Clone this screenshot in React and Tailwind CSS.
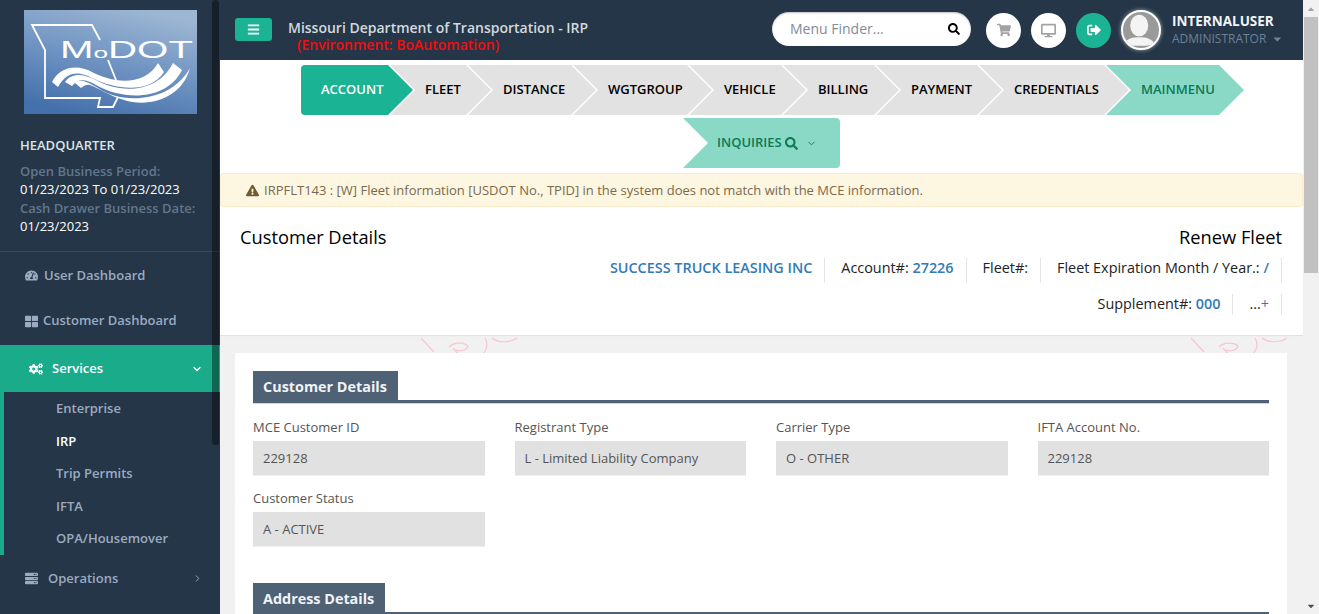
import React from "react";
import { ChevronDown, ChevronRight } from "lucide-react";
import {
  FaBars,
  FaCaretDown,
  FaCaretUp,
  FaCogs,
  FaDesktop,
  FaExclamationTriangle,
  FaSearch,
  FaServer,
  FaShoppingCart,
  FaSignOutAlt,
  FaTachometerAlt,
  FaThLarge,
} from "react-icons/fa";

const steps = [
  { label: "FLEET", width: "w-[101px]" },
  { label: "DISTANCE", width: "w-[128px]" },
  { label: "WGTGROUP", width: "w-[139px]" },
  { label: "VEHICLE", width: "w-[117px]" },
  { label: "BILLING", width: "w-[116px]" },
  { label: "PAYMENT", width: "w-[126px]" },
  { label: "CREDENTIALS", width: "w-[150px]" },
];
const subItems = ["Enterprise", "IRP", "Trip Permits", "IFTA", "OPA/Housemover"];

function Logo() {
  return (
    <svg width="173" height="104" viewBox="0 0 173 104" className="block">
      <defs>
        <linearGradient id="logoBg" x1="0.7" y1="0" x2="0.3" y2="1">
          <stop offset="0" stopColor="#9db6d3" />
          <stop offset="0.5" stopColor="#7094c2" />
          <stop offset="1" stopColor="#4470ab" />
        </linearGradient>
      </defs>
      <rect width="173" height="104" fill="url(#logoBg)" />
      <path d="M76 30 L68 15 L8 15 L21 40 L21 88 L76 88 L74 97 L89 97 L94 87" fill="none" stroke="#fff" strokeWidth="1.8" />
      <path d="M84 50 L92 70" fill="none" stroke="#fff" strokeWidth="1.8" />
      <text x="36" y="48" fill="#fff" fontFamily="Liberation Sans, sans-serif" fontSize="23" textLength="133" lengthAdjust="spacingAndGlyphs">
        M<tspan fontSize="15">o</tspan>DOT
      </text>
      <path d="M28 72 C36 56 54 54 68 62 C86 72 120 78 134 53 L140 62 C126 84 92 80 68 68 C54 60 42 62 34 77 Z" fill="#fff" />
      <path d="M41 72 C48 62 60 64 72 70 C92 82 132 86 149 53 L158 60 C142 92 98 90 72 75 C62 69 54 68 48 76 Z" fill="#fff" />
      <path d="M51 73 C56 68 64 72 74 78 C96 94 146 94 166 58 C158 88 126 98 100 90 C86 86 74 78 66 75 C62 74 60 76 57 78 Z" fill="#fff" />
    </svg>
  );
}

function Avatar() {
  return (
    <div className="w-10 h-10 rounded-full border-2 border-white overflow-hidden bg-[#9a9a9a] shadow-[0_0_4px_rgba(255,255,255,0.6)] shrink-0">
      <svg viewBox="0 0 40 40" width="100%" height="100%" className="block">
        <ellipse cx="18" cy="15" rx="10" ry="12" fill="#f4f4f4" />
        <path d="M1 36 C3 29 12 28 18 28 C24 28 33 29 35 36 C28 38 8 38 1 36 Z" fill="#f4f4f4" />
      </svg>
    </div>
  );
}

function NavRow({ icon, label, gap, rowClass }) {
  return (
    <div className={`flex items-center pl-[25px] text-[13px] font-semibold text-[#9cabc2] ${rowClass}`}>
      <span className="w-[13px] text-[13px] flex justify-center">{icon}</span>
      <span className={gap}>{label}</span>
    </div>
  );
}

function Sidebar() {
  return (
    <aside className="relative w-[220px] shrink-0 h-full bg-[#243647] overflow-hidden">
      <div className="pt-[10px] pl-6">
        <Logo />
      </div>
      <div className="pl-5 pt-[22px] border-b border-[#374a5b] h-[138px] text-[13px] leading-[18.5px]">
        <div className="font-semibold text-[#dfe3e6] mb-[7px]">HEADQUARTER</div>
        <div className="font-semibold text-[#62778e]">Open Business Period:</div>
        <div className="text-white">01/23/2023 To 01/23/2023</div>
        <div className="font-semibold text-[#62778e]">Cash Drawer Business Date:</div>
        <div className="text-white">01/23/2023</div>
      </div>
      <NavRow icon={<FaTachometerAlt />} label="User Dashboard" gap="ml-[6px]" rowClass="h-[47px]" />
      <NavRow icon={<FaThLarge />} label="Customer Dashboard" gap="ml-[5px]" rowClass="h-[46px] pb-[2px]" />
      <div className="h-[47px] bg-[#1aab8b] flex items-center pl-[29px] pr-[17px] text-white text-[13px] font-semibold">
        <FaCogs className="text-[14px]" />
        <span className="ml-[9px] flex-1">Services</span>
        <ChevronDown size={12} strokeWidth={2.5} />
      </div>
      <div className="border-l-4 border-[#1aab8b] h-[163px] pt-[1px]">
        {subItems.map((item) => (
          <div
            key={item}
            className={`h-[32.4px] pl-[52px] flex items-center text-[13px] font-semibold ${
              item === "IRP" ? "text-white" : "text-[#9cabc2]"
            }`}
          >
            {item}
          </div>
        ))}
      </div>
      <div className="flex items-center h-[47px] pl-[25px] pr-[17px] text-[13px] font-semibold text-[#9cabc2]">
        <FaServer className="text-[13px]" />
        <span className="ml-[10px] flex-1">Operations</span>
        <ChevronRight size={11} strokeWidth={2} />
      </div>
      <div className="absolute right-[1px] top-0 w-[7px] h-[445px] bg-black/40 rounded-[4px]"></div>
    </aside>
  );
}

function Header() {
  return (
    <header className="h-[60px] bg-[#243647] flex items-center pl-[15px] pr-[21px] shrink-0">
      <button className="w-[37px] h-[23px] rounded-[3px] bg-[#1ab394] text-white flex items-center justify-center text-[13px] -mt-[1px]">
        <FaBars />
      </button>
      <div className="ml-4 text-[14px] leading-[17px] font-semibold mt-[11px]">
        <div className="text-[#d3d9de]">Missouri Department of Transportation - IRP</div>
        <div className="text-[#f20d0d] pl-[9px]">(Environment: BoAutomation)</div>
      </div>
      <div className="ml-auto w-[199px] h-[34px] rounded-full bg-white flex items-center pl-[18px] pr-[11px] shadow-[inset_0_1px_2px_rgba(0,0,0,0.25)] -mt-[2px]">
        <span className="flex-1 text-[14px] text-[#7f8c9b] pb-[2px]">Menu Finder...</span>
        <FaSearch className="text-[12px] text-black" />
      </div>
      <div className="ml-[15px] w-[35px] h-[35px] rounded-full bg-white flex items-center justify-center text-[#a3a3a3] text-[14px]">
        <FaShoppingCart />
      </div>
      <div className="ml-[10px] w-[35px] h-[35px] rounded-full bg-white flex items-center justify-center text-[#a3a3a3] text-[15px]">
        <FaDesktop />
      </div>
      <div className="ml-[10px] w-[35px] h-[35px] rounded-full bg-[#1ab394] flex items-center justify-center text-white text-[14px]">
        <FaSignOutAlt />
      </div>
      <div className="ml-[10px]">
        <Avatar />
      </div>
      <div className="ml-[11px] w-[110px]">
        <div className="text-[13.5px] leading-[18px] font-bold text-[#f1f4f6]">INTERNALUSER</div>
        <div className="flex items-center text-[12px] leading-[18px] text-[#6c8298]">
          ADMINISTRATOR
          <FaCaretDown className="ml-[7px] text-[12px]" />
        </div>
      </div>
    </header>
  );
}

function Wizard() {
  const chevron =
    "[clip-path:polygon(0_0,calc(100%-25px)_0,100%_50%,calc(100%-25px)_100%,0_100%,25px_50%)]";
  return (
    <div className="bg-white pt-[5px] shrink-0">
      <div className="flex justify-center pl-[22px] text-[13px] font-semibold h-[50px]">
        <div className="h-[50px] w-[112px] flex items-center pl-5 bg-[#1ab394] text-white rounded-l-[4px] [clip-path:polygon(0_0,calc(100%-25px)_0,100%_50%,calc(100%-25px)_100%,0_100%)]">
          ACCOUNT
        </div>
        {steps.map((step) => (
          <div key={step.label} className={`h-[50px] flex items-center pl-[35px] -ml-[23px] bg-[#e2e2e2] text-black ${step.width} ${chevron}`}>
            {step.label}
          </div>
        ))}
        <div className={`h-[50px] w-[138px] flex items-center pl-[35px] -ml-[23px] bg-[#8ad9c6] text-[#0b7a55] ${chevron}`}>
          MAINMENU
        </div>
      </div>
      <div className="flex justify-center mt-[3px] h-[50px]">
        <div className="h-[50px] w-[157px] flex items-center pl-[34px] bg-[#8ad9c6] text-[#0b7a55] text-[13px] font-semibold rounded-r-[4px] [clip-path:polygon(0_0,100%_0,100%_100%,0_100%,25px_50%)]">
          INQUIRIES
          <FaSearch className="ml-[3px] text-[13px]" />
          <ChevronDown className="ml-[8px]" size={11} strokeWidth={2} />
        </div>
      </div>
    </div>
  );
}

function InfoItem({ children, className }) {
  return <div className={`pl-4 pr-3 border-r border-[#e4e4e4] flex items-center ${className}`}>{children}</div>;
}

function PageHead() {
  return (
    <div className="bg-white h-[128px] pt-[18px] pr-[21px] pl-5 shrink-0 shadow-[0_1px_1px_rgba(0,0,0,0.06)] relative z-10 text-[14.4px] text-[#222]">
      <div className="flex justify-between text-[18.3px] leading-[24px] text-black font-medium">
        <span>Customer Details</span>
        <span>Renew Fleet</span>
      </div>
      <div className="flex justify-end h-[25px] mt-[9px]">
        <InfoItem className="font-semibold text-[#337ab7] pb-[5px]">SUCCESS TRUCK LEASING INC</InfoItem>
        <InfoItem className="pb-[5px]">
          Account#:&nbsp;<span className="font-semibold text-[#337ab7]">27226</span>
        </InfoItem>
        <InfoItem className="pb-[5px]">Fleet#:</InfoItem>
        <InfoItem className="pb-[5px]">
          Fleet Expiration Month / Year.:&nbsp;<span className="font-semibold text-[#337ab7]">/</span>
        </InfoItem>
      </div>
      <div className="flex justify-end h-[21px] mt-[11px]">
        <InfoItem className="pb-[1px]">
          Supplement#:&nbsp;<span className="font-semibold text-[#337ab7]">000</span>
        </InfoItem>
        <InfoItem className="pb-[1px]">
          ...<span className="text-[#337ab7]">+</span>
        </InfoItem>
      </div>
    </div>
  );
}

function SectionTitle({ children }) {
  return (
    <div className="border-b-[3px] border-[#4e6175] shadow-[0_1px_0_#cfd5da] h-[32px]">
      <span className="inline-block h-[30px] pl-[10px] pr-[11px] bg-[#4e6175] text-[#f1f3f5] text-[14.4px] font-bold leading-[31px]">{children}</span>
    </div>
  );
}

function Field({ label, value }) {
  return (
    <div>
      <div className="text-[13px] leading-[18px] text-[#555] mb-[5px]">{label}</div>
      <div className="h-[35px] bg-[#e1e1e1] border-b border-[#eeeeee] px-[10px] pt-[1px] flex items-center text-[13px] text-[#555]">{value}</div>
    </div>
  );
}

function Watermark({ className }) {
  return (
    <svg width="100" height="18" viewBox="0 0 100 18" className={`absolute top-[2px] ${className}`} fill="none" stroke="#f8c6d0" strokeWidth="1.2">
      <path d="M1 1 L14 15" />
      <path d="M29 10 C34 5 44 5 48 9 C47 13 40 15 36 13" />
      <path d="M33 11 L38 17" />
      <path d="M65 1 C68 6 68 11 63 17" />
      <path d="M72 1 C78 6 90 6 97 1" />
    </svg>
  );
}

function Content() {
  return (
    <div className="relative flex-1 bg-[#f1f1f1] pt-[18px] pl-[15px] pr-[16px] min-h-0">
      <Watermark className="left-[200px]" />
      <Watermark className="left-[970px]" />
      <div className="relative bg-white h-[400px] pt-[18px] px-[18px]">
        <SectionTitle>Customer Details</SectionTitle>
        <div className="grid grid-cols-4 gap-x-[30px] gap-y-[13px] mt-[15px]">
          <Field label="MCE Customer ID" value="229128" />
          <Field label="Registrant Type" value="L - Limited Liability Company" />
          <Field label="Carrier Type" value="O - OTHER" />
          <Field label="IFTA Account No." value="229128" />
          <Field label="Customer Status" value="A - ACTIVE" />
        </div>
        <div className="mt-[36px]">
          <SectionTitle>Address Details</SectionTitle>
        </div>
      </div>
    </div>
  );
}

function PageScrollbar() {
  return (
    <div className="w-4 shrink-0 h-full bg-[#f1f1f1] flex flex-col items-center">
      <div className="h-[17px] flex items-center text-[#a3a3a3] text-[10px]">
        <FaCaretUp />
      </div>
      <div className="w-[14px] h-[256px] bg-[#c1c1c1]"></div>
      <div className="flex-1"></div>
      <div className="h-[17px] flex items-center text-[#505050] text-[10px]">
        <FaCaretDown />
      </div>
    </div>
  );
}

export default function App() {
  return (
    <div className="flex w-[1319px] h-[614px] overflow-hidden font-['Open_Sans',sans-serif] bg-white">
      <Sidebar />
      <div className="flex flex-col flex-1 min-w-0 h-full">
        <Header />
        <Wizard />
        <div className="bg-white h-[5px] shrink-0"></div>
        <div className="h-[34px] bg-[#fdf6e1] border border-[#fbeccd] rounded-[3px] flex items-center pl-[25px] pt-[1px] text-[13px] text-[#7a6a4d] shrink-0">
          <FaExclamationTriangle className="text-[13px] mr-[5px] text-[#6f5a32]" />
          IRPFLT143 : [W] Fleet information [USDOT No., TPID] in the system does not match with the MCE information.
        </div>
        <PageHead />
        <Content />
      </div>
      <PageScrollbar />
    </div>
  );
}
